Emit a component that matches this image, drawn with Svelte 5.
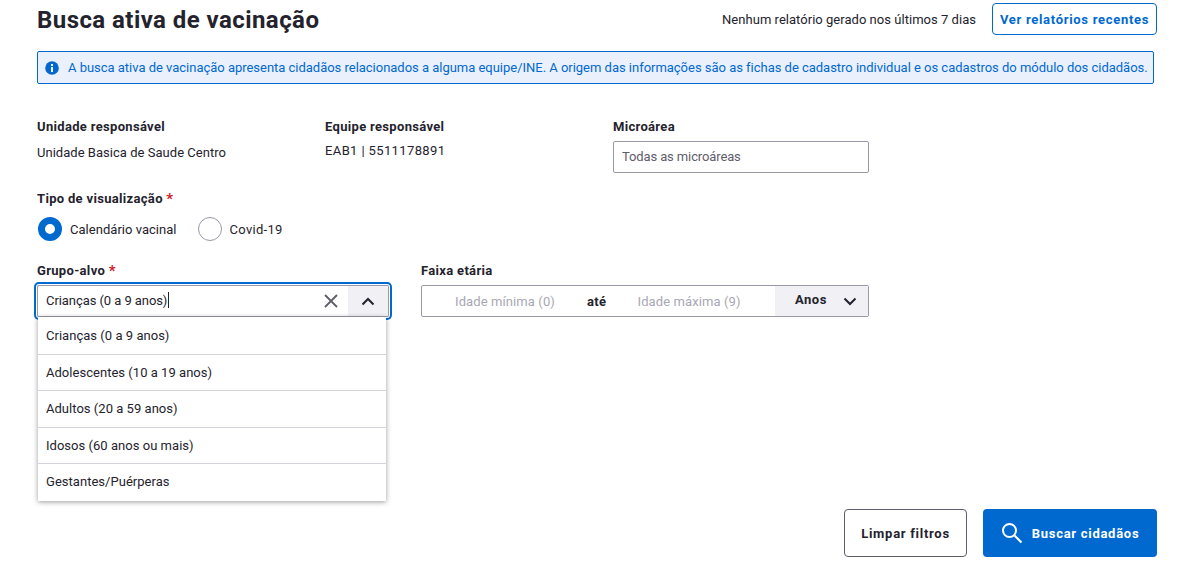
<script>
    const options = [
        'Crianças (0 a 9 anos)',
        'Adolescentes (10 a 19 anos)',
        'Adultos (20 a 59 anos)',
        'Idosos (60 anos ou mais)',
        'Gestantes/Puérperas'
    ];
</script>

<div class="page">
    <header class="top">
        <h1>Busca ativa de vacinação</h1>
        <div class="reports">
            <span>Nenhum relatório gerado nos últimos 7 dias</span>
            <button class="btn-recent">Ver relatórios recentes</button>
        </div>
    </header>

    <div class="alert">
        <svg width="16" height="16" viewBox="0 0 16 16">
            <circle cx="8" cy="8" r="6.8" fill="#0069d0" />
            <rect x="7" y="7" width="2" height="5" fill="#fff" />
            <rect x="7" y="4" width="2" height="2" fill="#fff" />
        </svg>
        <span>A busca ativa de vacinação apresenta cidadãos relacionados a alguma equipe/INE. A origem das informações são as fichas de cadastro individual e os cadastros do módulo dos cidadãos.</span>
    </div>

    <div class="info-row">
        <div>
            <div class="label">Unidade responsável</div>
            <div class="value">Unidade Basica de Saude Centro</div>
        </div>
        <div>
            <div class="label">Equipe responsável</div>
            <div class="value team">EAB1 | 5511178891</div>
        </div>
        <div>
            <div class="label">Microárea</div>
            <input class="micro" placeholder="Todas as microáreas" />
        </div>
    </div>

    <div class="label type-label">Tipo de visualização <span class="req">*</span></div>
    <div class="radios">
        <label class="radio"><span class="dot checked"></span>Calendário vacinal</label>
        <label class="radio covid"><span class="dot"></span>Covid-19</label>
    </div>

    <div class="filters">
        <div class="group">
            <div class="label">Grupo-alvo <span class="req">*</span></div>
            <div class="select">
                <div class="select-text">Crianças (0 a 9 anos)<span class="caret"></span></div>
                <svg class="clear" width="14" height="14" viewBox="0 0 14 14">
                    <path d="M1 1l12 12M13 1L1 13" stroke="#5f5d6b" stroke-width="1.8" fill="none" />
                </svg>
                <div class="toggle">
                    <svg width="14" height="9" viewBox="0 0 14 9">
                        <path d="M1.5 7.5L7 2l5.500 5.500" stroke="#24232d" stroke-width="2" fill="none" />
                    </svg>
                </div>
            </div>
            <ul class="menu">
                {#each options as option}
                    <li>{option}</li>
                {/each}
            </ul>
        </div>
        <div class="age">
            <div class="label">Faixa etária</div>
            <div class="age-box">
                <span class="ph min">Idade mínima (0)</span>
                <span class="until">até</span>
                <span class="ph max">Idade máxima (9)</span>
                <div class="unit">
                    <span>Anos</span>
                    <svg width="14" height="9" viewBox="0 0 14 9">
                        <path d="M1.500 1.500L7 7l5.500-5.500" stroke="#24232d" stroke-width="2" fill="none" />
                    </svg>
                </div>
            </div>
        </div>
    </div>

    <div class="actions">
        <button class="btn-clear">Limpar filtros</button>
        <button class="btn-search">
            <svg width="22" height="22" viewBox="0 0 22 22">
                <circle cx="8.500" cy="8.500" r="6.500" stroke="#fff" stroke-width="2" fill="none" />
                <path d="M13.500 13.500L20.500 20.500" stroke="#fff" stroke-width="2" fill="none" />
            </svg>
            Buscar cidadãos
        </button>
    </div>
</div>

<style>
    :global(body) {
        background: #fff;
        overflow: hidden;
    }

    .page {
        position: relative;
        width: 1188px;
        height: 567px;
        box-sizing: border-box;
        padding: 3px 31px 0 37px;
        font-family: Roboto, "Liberation Sans", sans-serif;
        font-size: 13px;
        letter-spacing: 0.03px;
        color: #24232d;
    }

    .top {
        display: flex;
        justify-content: space-between;
        align-items: center;
        height: 32px;
    }

    h1 {
        margin: 2px 0 0;
        font-size: 24px;
        font-weight: 700;
        letter-spacing: 0.44px;
        color: #24232d;
    }

    .reports {
        display: flex;
        align-items: center;
        gap: 16px;
    }

    .btn-recent {
        width: 165px;
        height: 32px;
        padding: 0;
        border: 1px solid #0069d0;
        border-radius: 4px;
        background: #fff;
        color: #0069d0;
        font: 700 13px Roboto, sans-serif;
        letter-spacing: 0.7px;
    }

    .alert {
        display: flex;
        align-items: center;
        gap: 8px;
        width: 1117px;
        height: 33px;
        box-sizing: border-box;
        margin-top: 16px;
        padding-left: 6px;
        border: 1px solid #0069d0;
        border-radius: 2px;
        background: #ebf0fd;
        color: #0069d0;
        white-space: nowrap;
        letter-spacing: -0.02px;
    }

    .alert svg {
        flex-shrink: 0;
    }

    .info-row {
        display: grid;
        grid-template-columns: 288px 288px 256px;
        margin-top: 35px;
        height: 54px;
    }

    .label {
        font-weight: 700;
        line-height: 16px;
        letter-spacing: 0.32px;
    }

    .value {
        margin-top: 10px;
        line-height: 16px;
    }

    .value.team {
        margin-top: 8px;
        letter-spacing: 0.38px;
    }

    .micro {
        display: block;
        width: 256px;
        height: 32px;
        box-sizing: border-box;
        margin-top: 6px;
        padding: 0 8px 2px;
        border: 1px solid #9a98a6;
        border-radius: 2px;
        font: 13px Roboto, sans-serif;
        letter-spacing: -0.12px;
    }

    .micro::placeholder {
        color: #5f5d6b;
        opacity: 1;
    }

    .type-label {
        margin-top: 18px;
    }

    .req {
        color: #d01c2a;
        font-size: 15px;
        line-height: 14px;
        vertical-align: -1px;
    }

    .radios {
        display: flex;
        gap: 21px;
        margin-top: 9px;
        margin-left: 1px;
        height: 25px;
    }

    .radio {
        display: flex;
        align-items: center;
        gap: 8px;
        padding-top: 2px;
    }

    .covid {
        letter-spacing: 0.28px;
    }

    .dot {
        width: 24px;
        height: 24px;
        box-sizing: border-box;
        margin-top: -2px;
        border: 1px solid #9a98a6;
        border-radius: 50%;
    }

    .dot.checked {
        border: 7px solid #0069d0;
    }

    .filters {
        display: flex;
        gap: 32px;
        margin-top: 22px;
    }

    .group {
        position: relative;
        width: 352px;
    }

    .select {
        display: flex;
        align-items: center;
        height: 32px;
        box-sizing: border-box;
        margin-top: 6px;
        border: 1px solid #9a98a6;
        border-radius: 2px;
        box-shadow: 0 0 0 1px #fff, 0 0 0 3px #0069d0;
    }

    .select-text {
        flex: 1;
        margin-top: -2px;
        padding-left: 8px;
        letter-spacing: -0.07px;
    }

    .caret {
        display: inline-block;
        width: 1px;
        height: 16px;
        margin-left: 1px;
        vertical-align: -3px;
        background: #24232d;
    }

    .clear {
        margin-right: 10px;
    }

    .toggle {
        display: flex;
        align-items: center;
        justify-content: center;
        width: 40px;
        height: 30px;
        background: #f0f0f5;
    }

    .menu {
        position: absolute;
        top: 54px;
        left: 1px;
        width: 348px;
        margin: 0;
        padding: 0;
        list-style: none;
        background: #fff;
        box-shadow: 0 1px 5px rgba(36, 35, 45, 0.45);
    }

    .menu li {
        height: 36.500px;
        box-sizing: border-box;
        padding: 10px 8px 0;
        line-height: 16px;
        border-bottom: 1px solid #d3d4dd;
    }

    .menu li:first-child {
        height: 37.500px;
        padding-top: 11px;
    }

    .menu li:last-child {
        border-bottom: 0;
    }

    .age {
        width: 448px;
    }

    .age-box {
        display: flex;
        align-items: center;
        height: 32px;
        box-sizing: border-box;
        margin-top: 6px;
        border: 1px solid #9a98a6;
        border-radius: 2px;
    }

    .ph {
        color: #a9a7b4;
        letter-spacing: 0.1px;
    }

    .min {
        margin-left: 33px;
    }

    .until {
        margin-left: 32px;
        font-weight: 700;
        letter-spacing: 0.4px;
    }

    .max {
        margin-left: 31px;
    }

    .unit {
        display: flex;
        align-items: center;
        justify-content: space-between;
        box-sizing: border-box;
        width: 93px;
        height: 30px;
        margin-left: auto;
        padding: 0 11px 0 20px;
        background: #f0f0f5;
        font-weight: 700;
        letter-spacing: 0.5px;
    }

    .unit span {
        margin-top: -4px;
    }

    .actions {
        position: absolute;
        top: 509px;
        right: 31px;
        display: flex;
        gap: 16px;
    }

    .actions button {
        height: 48px;
        padding: 0;
        border-radius: 4px;
        font: 700 13px Roboto, sans-serif;
        letter-spacing: 0.72px;
    }

    .btn-clear {
        width: 123px;
        border: 1px solid #5f5d6b;
        background: #fff;
        color: #24232d;
    }

    .btn-search {
        display: flex;
        align-items: center;
        justify-content: center;
        gap: 9px;
        width: 174px;
        border: 0;
        background: #0069d0;
        color: #fff;
    }
</style>
